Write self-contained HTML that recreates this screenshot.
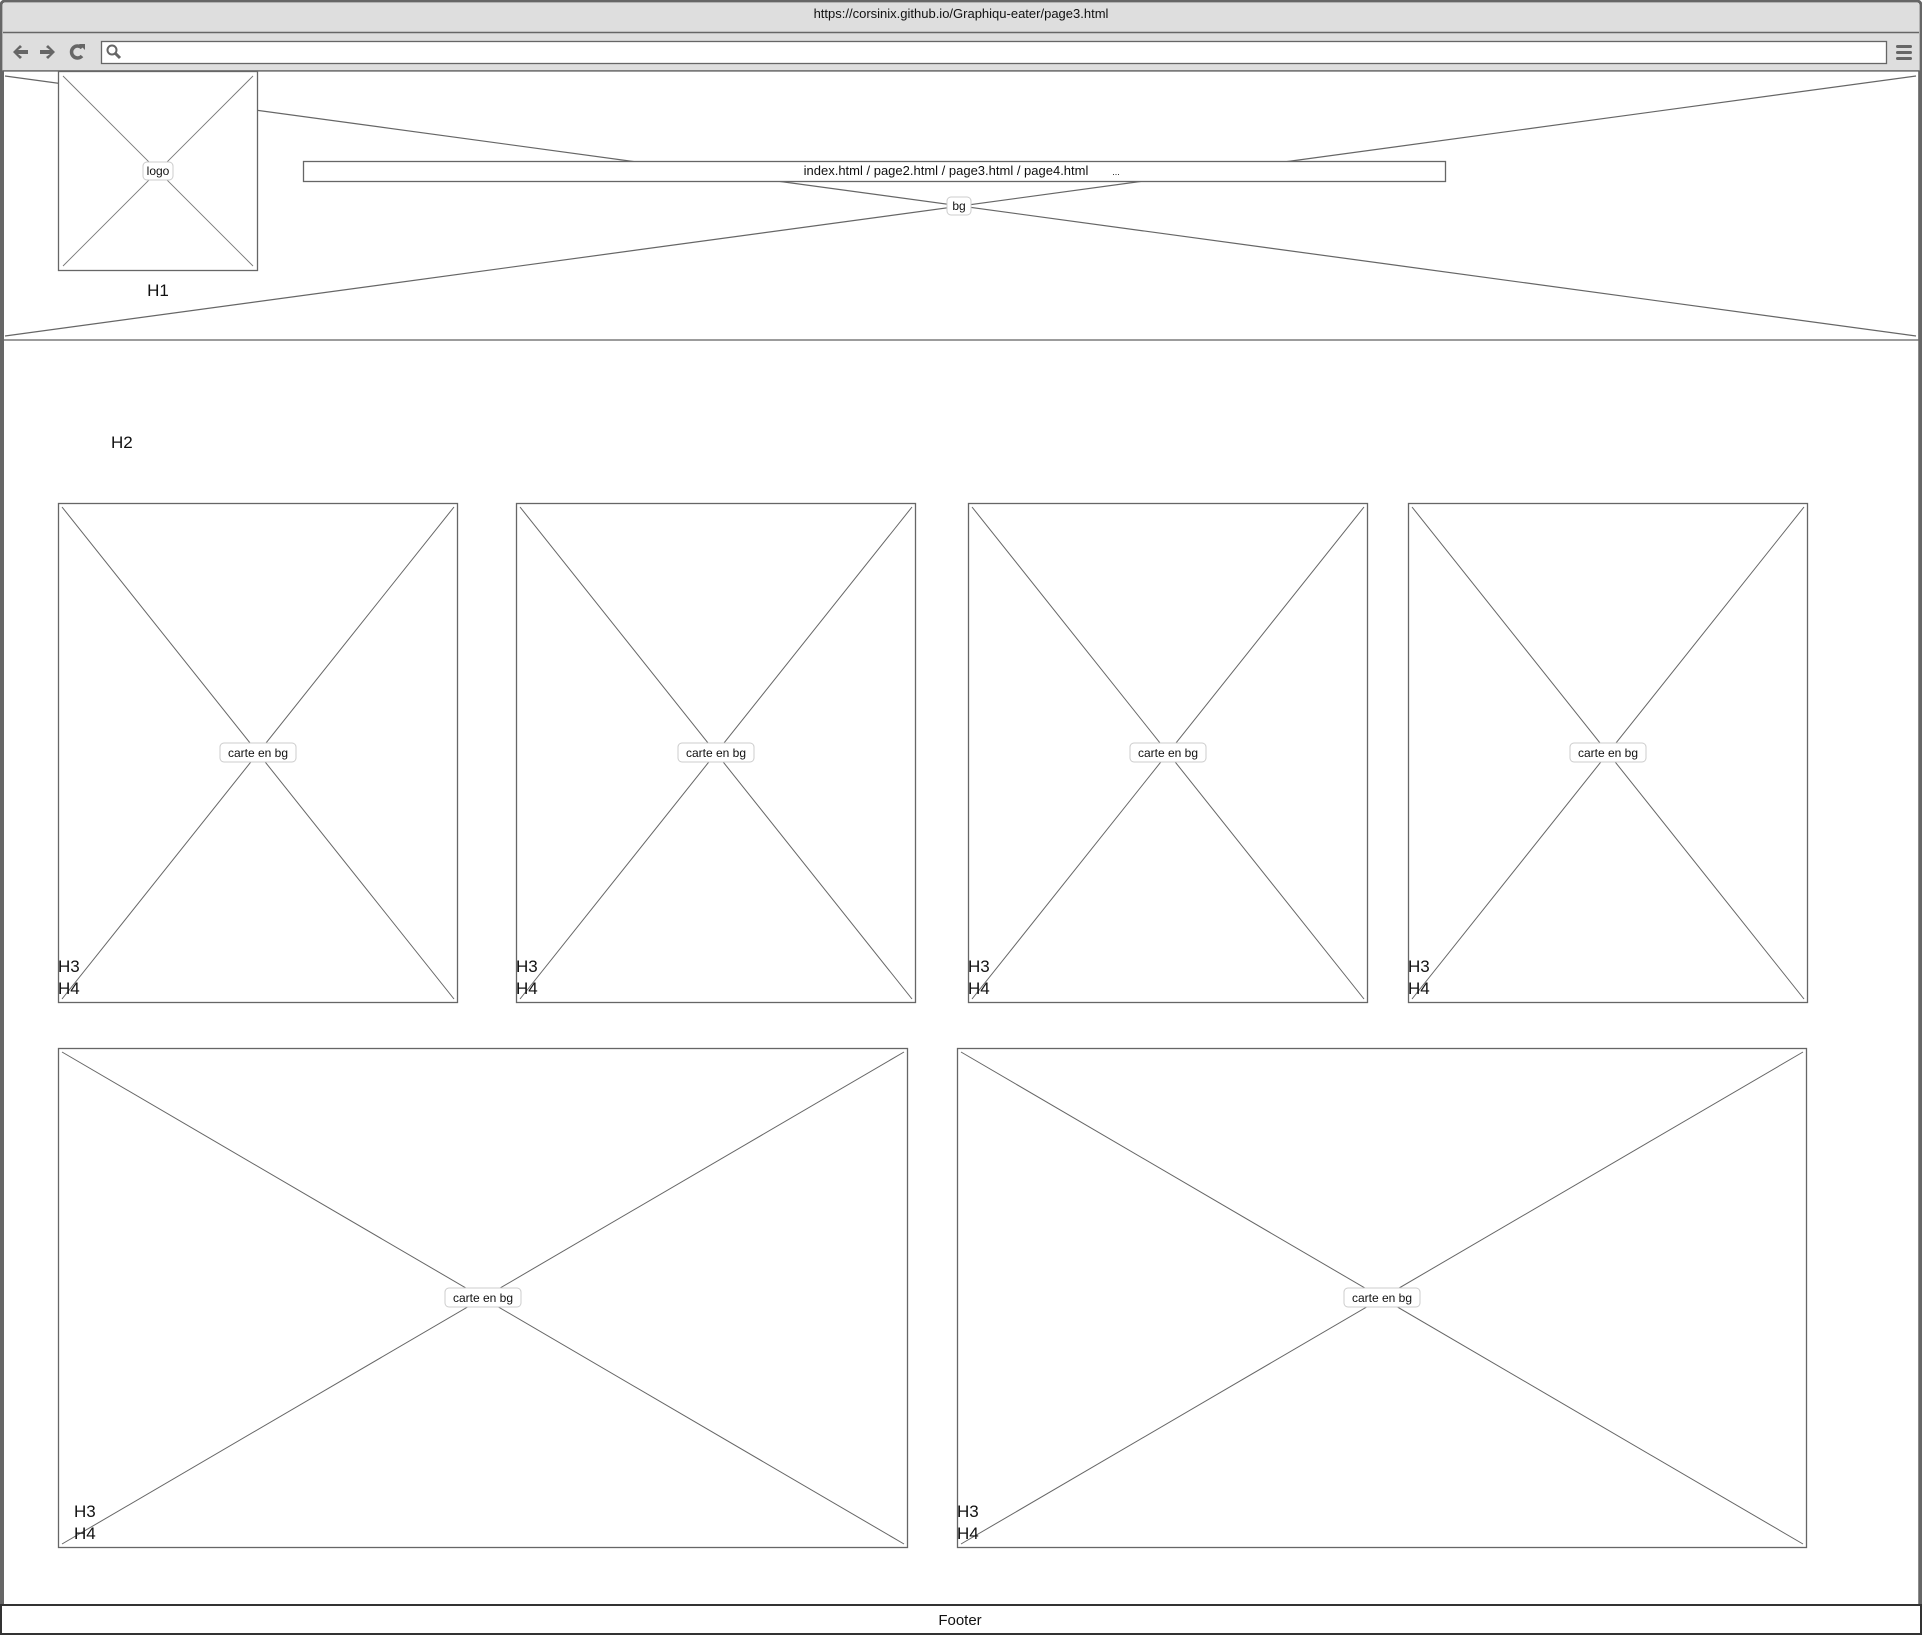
<!DOCTYPE html>
<html><head><meta charset="utf-8"><style>
html,body{margin:0;padding:0;background:#fff;width:1922px;height:1635px;overflow:hidden}
svg{display:block}
text{font-family:"Liberation Sans",sans-serif;fill:#111}
</style></head><body>
<svg width="1922" height="1635" viewBox="0 0 1922 1635" xmlns="http://www.w3.org/2000/svg">
<rect x="1" y="1" width="1920" height="1633" fill="#fff" stroke="#666" stroke-width="3" rx="4"/>
<rect x="3" y="3" width="1916" height="68" fill="#dedede"/>
<line x1="3" y1="32.5" x2="1919" y2="32.5" stroke="#666" stroke-width="1.5"/>
<line x1="3" y1="71" x2="1919" y2="71" stroke="#666" stroke-width="1.5"/>
<text x="961" y="18" font-size="13" text-anchor="middle">https://corsinix.github.io/Graphiqu-eater/page3.html</text>
<g fill="#666" stroke="#666">
<path d="M13 52 L20 45 L22 47 L18 50 L28 50 L28 54 L18 54 L22 57 L20 59 Z" stroke="none"/>
<path d="M55 52 L48 45 L46 47 L50 50 L40 50 L40 54 L50 54 L46 57 L48 59 Z" stroke="none"/>
<path d="M82 48 A6 6 0 1 0 82 56" fill="none" stroke-width="3.5"/>
<path d="M79 44 L85 44 L85 50 Z" stroke="none"/>
<rect x="1896" y="45" width="16" height="3" rx="1.5" stroke="none"/>
<rect x="1896" y="51" width="16" height="3" rx="1.5" stroke="none"/>
<rect x="1896" y="57" width="16" height="3" rx="1.5" stroke="none"/>
</g>
<rect x="101.5" y="41.5" width="1785" height="22" fill="#fff" stroke="#666" stroke-width="1.3"/>
<circle cx="112" cy="50" r="4.5" fill="none" stroke="#666" stroke-width="2"/>
<line x1="115" y1="53" x2="120" y2="58" stroke="#666" stroke-width="3"/>
<rect x="3" y="71" width="1916" height="269" fill="#fff" stroke="#666" stroke-width="1.3"/>
<g stroke="#666" stroke-width="1.2">
<line x1="5" y1="76" x2="1916" y2="336"/>
<line x1="5" y1="336" x2="1916" y2="76"/>
</g>
<line x1="3" y1="71" x2="3" y2="1605" stroke="#666" stroke-width="2"/>
<line x1="1919" y1="71" x2="1919" y2="1605" stroke="#666" stroke-width="1.5"/>
<rect x="58.5" y="71.5" width="199" height="199" fill="#fff" stroke="#666" stroke-width="1.3"/>
<g stroke="#777" stroke-width="0.9"><line x1="63" y1="76" x2="253" y2="266"/><line x1="63" y1="266" x2="253" y2="76"/></g>
<rect x="143" y="162" width="30" height="18" rx="4" fill="#fff" stroke="#ccc"/>
<text x="158" y="175" font-size="12" text-anchor="middle">logo</text>
<text x="158" y="296" font-size="17" text-anchor="middle">H1</text>
<rect x="303.5" y="161.5" width="1142" height="20" fill="#fff" stroke="#666" stroke-width="1.3"/>
<text x="946" y="175" font-size="13" text-anchor="middle">index.html / page2.html / page3.html / page4.html</text>
<text x="1116" y="175" font-size="9" text-anchor="middle">...</text>
<rect x="947" y="197" width="24" height="18" rx="4" fill="#fff" stroke="#ccc"/>
<text x="959" y="210" font-size="12" text-anchor="middle">bg</text>
<text x="111" y="448" font-size="17">H2</text>
<g stroke="#666" fill="#fff">
<rect x="58.5" y="503.5" width="399" height="499" stroke-width="1.3"/>
<rect x="516.5" y="503.5" width="399" height="499" stroke-width="1.3"/>
<rect x="968.5" y="503.5" width="399" height="499" stroke-width="1.3"/>
<rect x="1408.5" y="503.5" width="399" height="499" stroke-width="1.3"/>
<rect x="58.5" y="1048.5" width="849" height="499" stroke-width="1.3"/>
<rect x="957.5" y="1048.5" width="849" height="499" stroke-width="1.3"/>
</g>
<g stroke="#666" stroke-width="1">
<line x1="62" y1="507" x2="454" y2="999"/><line x1="62" y1="999" x2="454" y2="507"/>
<line x1="520" y1="507" x2="912" y2="999"/><line x1="520" y1="999" x2="912" y2="507"/>
<line x1="972" y1="507" x2="1364" y2="999"/><line x1="972" y1="999" x2="1364" y2="507"/>
<line x1="1412" y1="507" x2="1804" y2="999"/><line x1="1412" y1="999" x2="1804" y2="507"/>
<line x1="62" y1="1052" x2="904" y2="1544"/><line x1="62" y1="1544" x2="904" y2="1052"/>
<line x1="961" y1="1052" x2="1803" y2="1544"/><line x1="961" y1="1544" x2="1803" y2="1052"/>
</g>
<g font-size="12">
<rect x="220" y="743" width="76" height="19" rx="4" fill="#fff" stroke="#ccc"/><text x="258" y="757" text-anchor="middle">carte en bg</text>
<rect x="678" y="743" width="76" height="19" rx="4" fill="#fff" stroke="#ccc"/><text x="716" y="757" text-anchor="middle">carte en bg</text>
<rect x="1130" y="743" width="76" height="19" rx="4" fill="#fff" stroke="#ccc"/><text x="1168" y="757" text-anchor="middle">carte en bg</text>
<rect x="1570" y="743" width="76" height="19" rx="4" fill="#fff" stroke="#ccc"/><text x="1608" y="757" text-anchor="middle">carte en bg</text>
<rect x="445" y="1288" width="76" height="19" rx="4" fill="#fff" stroke="#ccc"/><text x="483" y="1302" text-anchor="middle">carte en bg</text>
<rect x="1344" y="1288" width="76" height="19" rx="4" fill="#fff" stroke="#ccc"/><text x="1382" y="1302" text-anchor="middle">carte en bg</text>
</g>
<g font-size="17">
<text x="58" y="972">H3</text><text x="58" y="994">H4</text>
<text x="516" y="972">H3</text><text x="516" y="994">H4</text>
<text x="968" y="972">H3</text><text x="968" y="994">H4</text>
<text x="1408" y="972">H3</text><text x="1408" y="994">H4</text>
<text x="74" y="1517">H3</text><text x="74" y="1539">H4</text>
<text x="957" y="1517">H3</text><text x="957" y="1539">H4</text>
</g>
<rect x="1" y="1605" width="1920" height="29" fill="#fff" stroke="#333" stroke-width="2"/>
<text x="960" y="1625" font-size="15" text-anchor="middle">Footer</text>
</svg>
</body></html>
